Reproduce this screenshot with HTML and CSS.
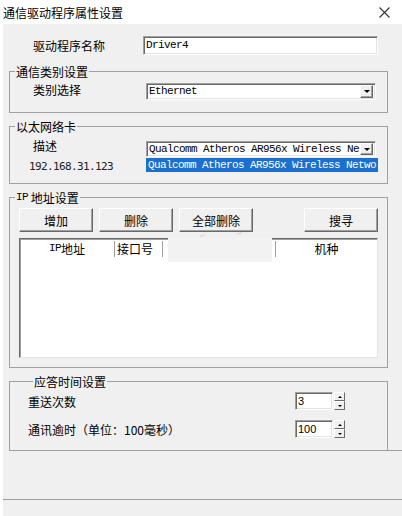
FILE: index.html
```html
<!DOCTYPE html>
<html lang="zh-CN">
<head>
    <meta charset="UTF-8">
    <title>通信驱动程序属性设置</title>
    <link rel="stylesheet" href="styles.css">
</head>
<body>
    <div class="titlebar">
        <span class="title">通信驱动程序属性设置</span>
        <svg class="close" width="11" height="11" viewBox="0 0 11 11">
            <path d="M0.5 0.5L10.5 10.5M10.5 0.5L0.5 10.5" stroke="#333" stroke-width="1.1" fill="none"/>
        </svg>
    </div>

    <div class="dialog">
        <div class="name-row">
            <span class="name-label">驱动程序名称</span>
            <div class="edit name-edit mono">Driver4</div>
        </div>

        <fieldset class="group group-type">
            <legend>通信类别设置</legend>
            <div class="field-row">
                <span class="field-label">类别选择</span>
                <div class="combo type-combo">
                    <span class="combo-text mono">Ethernet</span>
                    <span class="drop-btn"><i class="tri-down"></i></span>
                </div>
            </div>
        </fieldset>

        <fieldset class="group group-nic">
            <legend>以太网络卡</legend>
            <div class="field-row">
                <span class="field-label">描述</span>
                <div class="combo nic-combo">
                    <span class="combo-text mono">Qualcomm Atheros AR956x Wireless Ne</span>
                    <span class="drop-btn"><i class="tri-down"></i></span>
                </div>
            </div>
            <div class="ip-row">
                <span class="ip-text">192.168.31.123</span>
                <div class="drop-item mono">Qualcomm Atheros AR956x Wireless Netwo</div>
            </div>
        </fieldset>

        <fieldset class="group group-ip">
            <legend><span class="mono">IP</span> 地址设置</legend>
            <div class="btn-row">
                <button class="btn">增加</button>
                <button class="btn">删除</button>
                <button class="btn">全部删除</button>
                <button class="btn btn-search">搜寻</button>
            </div>
            <div class="list">
                <div class="list-head">
                    <span class="col col-ip"><span class="mono">IP</span>地址</span>
                    <span class="col col-port">接口号</span>
                    <span class="col col-blank"></span>
                    <span class="col col-model">机种</span>
                </div>
                <!-- leftover patch painted over the header -->
                <div class="patch"></div>
                <i class="speck speck-1"></i>
                <i class="speck speck-2"></i>
            </div>
        </fieldset>

        <fieldset class="group group-time">
            <legend>应答时间设置</legend>
            <div class="spin-row">
                <span class="spin-label">重送次数</span>
                <div class="edit spin-edit">3</div>
                <div class="spin-btns">
                    <span class="spin-btn"><i class="tri-up"></i></span>
                    <span class="spin-btn"><i class="tri-down small"></i></span>
                </div>
            </div>
            <div class="spin-row">
                <span class="spin-label">通讯逾时（单位：100毫秒）</span>
                <div class="edit spin-edit">100</div>
                <div class="spin-btns">
                    <span class="spin-btn"><i class="tri-up"></i></span>
                    <span class="spin-btn"><i class="tri-down small"></i></span>
                </div>
            </div>
        </fieldset>
        <div class="tail-line"></div>

        <div class="footer"></div>
    </div>
</body>
</html>
```

FILE: styles.css
```css
* {
    box-sizing: border-box;
}

body {
    margin: 0;
    width: 402px;
    height: 516px;
    overflow: hidden;
    background: #fff;
    font-family: "Noto Sans CJK SC", "Microsoft YaHei", sans-serif;
    font-size: 12px;
    line-height: 15px;
    color: #000;
}

.mono {
    font-family: "Liberation Mono", monospace;
    font-size: 11px;
    letter-spacing: -0.6px;
}

/* title bar */
.titlebar {
    height: 24px;
    display: flex;
    align-items: center;
    justify-content: space-between;
    padding: 0 12px 0 3px;
}

.title {
    font-size: 12px;
}

/* dialog body */
.dialog {
    margin-left: 3px;
    height: 492px;
    background: #f0f0f0;
    padding: 0 14px 0 6px;
}

.edit {
    background: #fff;
    border: 1px solid;
    border-color: #a0a0a0 #fff #fff #a0a0a0;
    box-shadow: inset 1px 1px #696969, inset -1px -1px #e3e3e3;
}

.name-row {
    display: flex;
    align-items: center;
    padding: 12px 0 0 24px;
}

.name-label {
    width: 110px;
}

.name-edit {
    width: 235px;
    height: 19px;
    padding: 1px 2px;
    line-height: 15px;
}

/* group boxes */
.group {
    margin: 6px 0 0;
    padding: 0;
    border: 1px solid #a0a0a0;
    min-width: 0;
}

.group legend {
    height: 15px;
    margin-left: 5px;
    padding: 0 1px;
    line-height: 15px;
}

.group legend .mono {
    vertical-align: top;
}

.group-type {
    margin-top: 9px;
    padding-bottom: 12px;
}

.field-row {
    display: flex;
    align-items: center;
    padding-left: 23px;
}

.field-label {
    width: 113px;
}

.combo {
    display: flex;
    align-items: center;
    width: 230px;
    background: #fff;
    border: 1px solid;
    border-color: #a0a0a0 #fff #fff #a0a0a0;
    box-shadow: inset 1px 1px #696969, inset -1px -1px #e3e3e3;
    padding: 0 2px 0 2px;
}

.type-combo {
    margin-top: 4px;
    height: 17px;
}

.combo-text {
    flex: 1;
    white-space: nowrap;
    overflow: hidden;
}

.drop-btn {
    width: 13px;
    height: 13px;
    display: flex;
    align-items: center;
    justify-content: center;
    background: #f0f0f0;
    border: 1px solid;
    border-color: #fff #696969 #696969 #fff;
    box-shadow: inset -1px -1px #a0a0a0;
}

.tri-down {
    width: 0;
    height: 0;
    border-left: 3px solid transparent;
    border-right: 3px solid transparent;
    border-top: 3px solid #000;
}

.tri-up {
    width: 0;
    height: 0;
    border-left: 2px solid transparent;
    border-right: 2px solid transparent;
    border-bottom: 2px solid #000;
}

.tri-down.small {
    border-left-width: 2px;
    border-right-width: 2px;
    border-top-width: 2px;
}

.group-nic {
    padding-bottom: 11px;
}

.nic-combo {
    margin-top: 7px;
    height: 16px;
}

.nic-combo .drop-btn {
    height: 12px;
}

.ip-row {
    display: flex;
    align-items: center;
    height: 14px;
    margin-top: 1px;
    padding-left: 19px;
}

.ip-text {
    width: 117px;
    font-family: "DejaVu Sans Mono", monospace;
    font-size: 11px;
    line-height: 14px;
    letter-spacing: -0.62px;
    color: #222;
    padding-top: 3px;
}

.drop-item {
    width: 232px;
    height: 14px;
    line-height: 14px;
    padding-left: 2px;
    background: #1a6fd0;
    color: #fff;
    white-space: nowrap;
    overflow: hidden;
}

/* IP address group */
.group-ip {
    padding-bottom: 9px;
}

.btn-row {
    display: flex;
    gap: 6px;
    padding: 3px 9px 0;
}

.btn {
    width: 74px;
    height: 24px;
    font: inherit;
    color: #000;
    background: #f0f0f0;
    border: 1px solid;
    border-color: #fff #696969 #696969 #fff;
    box-shadow: inset -1px -1px #a0a0a0;
    padding: 0;
}

.btn-search {
    margin-left: auto;
}

.list {
    position: relative;
    height: 120px;
    margin: 6px 9px 0;
    background: #fff;
    border: 1px solid;
    border-color: #696969 #e3e3e3 #e3e3e3 #696969;
    box-shadow: inset 1px 1px #a0a0a0;
}

.list-head {
    display: grid;
    grid-template-columns: 95px 48px 113px 1fr;
    height: 18px;
    padding-top: 2px;
}

.col {
    line-height: 15px;
    border-right: 1px solid #a0a0a0;
}

.col .mono {
    vertical-align: top;
}

.col-ip,
.col-model {
    text-align: center;
}

.col-port {
    padding-left: 2px;
}

.col-model {
    border-right: none;
}

.patch {
    position: absolute;
    left: 148px;
    top: -1px;
    width: 104px;
    height: 24px;
    background: #f2f2f2;
}

.speck {
    position: absolute;
    width: 5px;
    height: 1px;
    background: #c8c8c8;
    transform: rotate(-20deg);
}

.speck-1 {
    left: 180px;
    top: -4px;
}

.speck-2 {
    left: 217px;
    top: -6px;
}

/* response time group */
.group-time {
    padding: 3px 0 12px 18px;
}

.spin-row {
    display: flex;
    align-items: center;
    height: 18px;
}

.spin-row + .spin-row {
    margin-top: 10px;
}

.spin-label {
    width: 267px;
}

.spin-edit {
    width: 38px;
    height: 18px;
    padding: 1px 2px;
    font-family: "Liberation Sans", Arial, sans-serif;
    font-size: 11px;
    line-height: 15px;
}

.spin-btns {
    display: flex;
    flex-direction: column;
    margin-left: 1px;
}

.spin-btn {
    width: 11px;
    height: 9px;
    display: flex;
    align-items: center;
    justify-content: center;
    background: #f0f0f0;
    border: 1px solid;
    border-color: #fff #696969 #696969 #fff;
}

.tail-line {
    height: 0;
    margin: -1px -14px 0 0;
    border-top: 1px solid #a0a0a0;
}

.footer {
    margin: 48px -14px 0 -6px;
    border-top: 1px solid #a0a0a0;
    height: 20px;
}
```
